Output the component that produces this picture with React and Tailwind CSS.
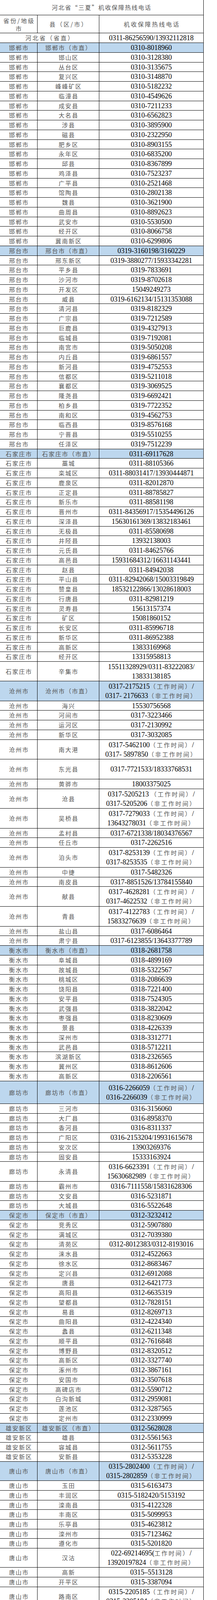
import React, { useState } from 'react';

const CJK = /([\u2E80-\u9FFF\u3000-\u303F\uFF00-\uFFEF]+)/;

// 行高目标（px），累计后取整
const TARGET = { s: 24.75, t: 24.6, u: 24.65, d: 50.6, d2: 49.35, x: 50, y: 50.5, l: 58.3 };

const sections = [
  {
    city: '邯郸市', h: 's', rows: [
      ['邯郸市（市直）', '0310-8018960'],
      ['邯山区', '0310-3128380'],
      ['丛台区', '0310-3135675'],
      ['复兴区', '0310-3148870'],
      ['峰峰矿区', '0310-5182232'],
      ['临漳县', '0310-4549626'],
      ['成安县', '0310-7211233'],
      ['大名县', '0310-6562823'],
      ['涉县', '0310-3895900'],
      ['磁县', '0310-2322950'],
      ['肥乡区', '0310-8903155'],
      ['永年区', '0310-6835200'],
      ['邱县', '0310-8367899'],
      ['鸡泽县', '0310-7523237'],
      ['广平县', '0310-2521468'],
      ['馆陶县', '0310-2802138'],
      ['魏县', '0310-3621900'],
      ['曲周县', '0310-8892623'],
      ['武安市', '0310-5530500'],
      ['经开区', '0310-8066758'],
      ['冀南新区', '0310-6299806'],
    ],
  },
  {
    city: '邢台市', h: 's', rows: [
      ['邢台市（市直）', '0319-3160198/3160229'],
      ['邢东新区', '0319-3880277/15933342281'],
      ['平乡县', '0319-7833691'],
      ['沙河市', '0319-8702618'],
      ['开发区', '15049249273'],
      ['威县', '0319-6162134/15131353088'],
      ['清河县', '0319-8182329'],
      ['广宗县', '0319-7212589'],
      ['巨鹿县', '0319-4327913'],
      ['临城县', '0319-7192081'],
      ['南宫市', '0319-5050208'],
      ['内丘县', '0319-6861557'],
      ['新河县', '0319-4752553'],
      ['信都区', '0319-5211018'],
      ['襄都区', '0319-3069525'],
      ['隆尧县', '0319-6692421'],
      ['柏乡县', '0319-7722352'],
      ['南和区', '0319-4562753'],
      ['临西县', '0319-8576168'],
      ['宁晋县', '0319-5510255'],
      ['任泽区', '0319-7512239'],
    ],
  },
  {
    city: '石家庄市', h: 's', rows: [
      ['石家庄市（市直）', '0311-69117628'],
      ['藁城', '0311-88105366'],
      ['栾城区', '0311-88031417/13930444871'],
      ['鹿泉区', '0311-82012870'],
      ['正定县', '0311-88785827'],
      ['新乐市', '0311-88581198'],
      ['晋州市', '0311-84356917/15354496126'],
      ['深泽县', '15630161369/13832183461'],
      ['无极县', '0311-85580698'],
      ['井陉县', '13932138003'],
      ['元氏县', '0311-84625766'],
      ['高邑县', '15931684312/16631143441'],
      ['赵县', '0311-84942038'],
      ['平山县', '0311-82942068/15003319849'],
      ['赞皇县', '18532122866/13028618003'],
      ['行唐县', '0311-82981219'],
      ['灵寿县', '15613157374'],
      ['矿区', '15081860152'],
      ['长安区', '0311-85996718'],
      ['新华区', '0311-86952388'],
      ['高新区', '13833169968'],
      ['经开区', '13315958813'],
      ['辛集市', ['15511328929/0311-83222083/', '13833138185'], 'x'],
    ],
  },
  {
    city: '沧州市', h: 's', rows: [
      ['沧州市（市直）', ['0317-2175215（工作时间）/', '0317- 2176633（非工作时间）'], 'd'],
      ['海兴', '15530756568'],
      ['河间市', '0317-3223466'],
      ['运河区', '0317-2130992'],
      ['新华区', '0317-3032085'],
      ['南大港', ['0317-5462100（工作时间）/', '0317- 5897850（非工作时间）'], 'd'],
      ['东光县', '0317-7721533/18333768531', 'd'],
      ['黄骅市', '18003375025'],
      ['沧县', ['0317-5205213 （工作时间）/', '0317-5205206（非工作时间）'], 'd'],
      ['吴桥县', ['0317-7279033（工作时间）/', '13643278031（非工作时间）'], 'd'],
      ['孟村县', '0317-6721338/18034376567'],
      ['任丘市', '0317-2262516'],
      ['泊头市', ['0317-8253139（工作时间）/', '0317-8253535（非工作时间）'], 'd'],
      ['中捷', '0317-5482326'],
      ['南皮县', '0317-8851526/13784155840'],
      ['献县', ['0317-4628281（工作时间）/', '0317-4622532（非工作时间）'], 'd'],
      ['青县', ['0317-4122783（工作时间）/', '15833276639（非工作时间）'], 'd'],
      ['盐山县', '0317-6086464'],
      ['肃宁县', '0317-6123855/13643377789'],
    ],
  },
  {
    city: '衡水市', h: 's', rows: [
      ['衡水市（市直）', '0318-2681758'],
      ['阜城县', '0318-4899169'],
      ['故城县', '0318-5322567'],
      ['桃城区', '0318-2086639'],
      ['饶阳县', '0318-7221400'],
      ['安平县', '0318-7524305'],
      ['武强县', '0318-3822042'],
      ['枣强县', '0318-8230609'],
      ['景县', '0318-4226339'],
      ['深州市', '0318-3312771'],
      ['武邑县', '0318-5712211'],
      ['滨湖新区', '0318-2326565'],
      ['冀州区', '0318-8612606'],
      ['高新区', '0318-2206561'],
    ],
  },
  {
    city: '廊坊市', h: 's', rows: [
      ['廊坊市（市直）', ['0316-2266059（工作时间）/', '0316-2266039（非工作时间）'], 'l'],
      ['三河市', '0316-3156060'],
      ['大厂县', '0316-8958370'],
      ['香河县', '0316-8311337'],
      ['广阳区', '0316-2153204/19931615678'],
      ['安次区', '13903269376'],
      ['固安县', '15333163924'],
      ['永清县', ['0316-6623391（工作时间）/', '15630682989（非工作时间）'], 'y'],
      ['霸州市', '0316-7111558/15831628306'],
      ['文安县', '0316-5231871'],
      ['大城县', '0316-5522648'],
    ],
  },
  {
    city: '保定市', h: 's', rows: [
      ['保定市（市直）', '0312-3232412'],
      ['竞秀区', '0312-5907880'],
      ['满城区', '0312-7039380'],
      ['清苑区', '0312-8012383/0312-8193016'],
      ['涞水县', '0312-4522663'],
      ['徐水区', '0312-8683467'],
      ['定兴县', '0312-6912088'],
      ['唐县', '0312-6421773'],
      ['高阳县', '0312-6635319'],
      ['望都县', '0312-7828151'],
      ['易县', '0312-8269713'],
      ['曲阳县', '0312-4224340'],
      ['蠡县', '0312-6211348'],
      ['顺平县', '0312-7616848'],
      ['博野县', '0312-8320512'],
      ['高新区', '0312-3327740'],
      ['涿州市', '0312-3867161'],
      ['安国市', '0312-3507618'],
      ['高碑店市', '0312-5590712'],
      ['白沟新城', '0312-2959081'],
      ['莲池区', '0312-3287565'],
      ['定州市', '0312-2330999'],
    ],
  },
  {
    city: '雄安新区', h: 't', rows: [
      ['雄安新区（市直）', '0312-5628028'],
      ['雄县', '0312-5561563'],
      ['容城县', '0312-5611755'],
      ['安新县', '0312-5353228'],
    ],
  },
  {
    city: '唐山市', h: 'u', rows: [
      ['唐山市（市直）', ['0315-2802400（工作时间）/', '0315-2802859（非工作时间）'], 'd2'],
      ['玉田', '0315-6163473'],
      ['丰润区', '0315-5182420/5153192'],
      ['滦南县', '0315-4122328'],
      ['丰南区', '0315-5099953'],
      ['乐亭县', '0315-4623812'],
      ['滦州市', '0315-7123462'],
      ['遵化市', '0315-5201820'],
      ['汉沽', ['022-69214695(工作时间）/', '13920197824（非工作时间）'], 'd2'],
      ['高新', '0315–5513128'],
      ['开平区', '0315-3387094'],
      ['路南区', ['0315-2205185（工作时间）/', '0315-2205184（非工作时间）'], 'd2'],
      ['迁安', '0315-5215611'],
      ['古冶区', '0315-3512127'],
      ['海港', '0315-2915916'],
      ['芦台', '022-69388074'],
      ['路北区', '0315-3724003'],
      ['曹妃甸', '0315-8727856'],
      ['迁西', '0315-5661987'],
    ],
  },
  {
    city: '秦皇岛市', h: 't', rows: [
      ['秦皇岛市（市直）', '0335-8017577'],
      ['卢龙县', '0335-7012246'],
      ['昌黎县', '0335-2989536/15028565999'],
    ],
  },
];

// 展开为行，按累计位置取整得到每行高度
const allRows = [];
let cum = 110;
sections.forEach((sec) => {
  sec.rows.forEach(([county, phone, h], i) => {
    const start = Math.round(cum);
    cum += TARGET[h || sec.h];
    allRows.push({ city: sec.city, county, phone, px: Math.round(cum) - start, blue: i === 0 });
  });
});

function Zh({ children, wide }) {
  return (
    <span
      className={`font-['Noto_Sans_CJK_SC',sans-serif] text-[15px] leading-[20px] text-[#555] whitespace-nowrap ${
        wide ? 'tracking-[3px] mr-[-3px]' : 'tracking-[2px] mr-[-2px]'
      }`}
    >
      {children}
    </span>
  );
}

function Mixed({ text }) {
  const parts = text.split(CJK);
  return parts.map((p, i) => {
    if (!p) return null;
    if (i % 2 === 1) {
      return (
        <span key={i} className="font-['Noto_Sans_CJK_SC',sans-serif] text-[15px] leading-[20px] text-[#555] tracking-[3px]">
          {p}
        </span>
      );
    }
    return (
      <span key={i} className="font-['Liberation_Serif',serif] text-[18px] leading-[20px] text-black whitespace-pre">
        {p}
      </span>
    );
  });
}

function Row({ city, county, phone, px, blue }) {
  const lines = Array.isArray(phone) ? phone : [phone];
  return (
    <div
      className={`flex shrink-0 overflow-hidden border-b border-black ${blue ? 'bg-[#bdd7ee]' : ''}`}
      style={{ height: px }}
    >
      <div className="w-[96px] shrink-0 border-r border-black flex items-center justify-center">
        <Zh>{city}</Zh>
      </div>
      <div className="w-[158px] shrink-0 border-r border-black flex items-center justify-center">
        <Zh>{county}</Zh>
      </div>
      <div className="w-[267px] shrink-0 border-r border-black flex flex-col items-center justify-center">
        {lines.map((l, i) => (
          <div key={i} className="flex items-center h-[24px] whitespace-nowrap">
            <Mixed text={l} />
          </div>
        ))}
      </div>
    </div>
  );
}

// 视口比 555px 窄时按比例缩放整页
function useFitZoom() {
  const [zoom] = useState(() => {
    if (typeof document === 'undefined') return 1;
    const w = document.documentElement.clientWidth || window.innerWidth || 555;
    return w > 0 && w < 555 ? w / 555 : 1;
  });
  return zoom;
}

export default function App() {
  const zoom = useFitZoom();
  return (
    <div className="w-[555px] bg-white flex" style={{ zoom }}>
      <div className="w-[521px] shrink-0 flex flex-col">
        {/* 标题 */}
        <div className="h-[39px] shrink-0 border-b border-r border-black flex items-center justify-center">
          <span className="font-['Noto_Sans_CJK_SC',sans-serif] text-[15px] leading-[20px] text-[#555] tracking-[2px]">
            河北省“三夏”机收保障热线电话
          </span>
        </div>

        {/* 表头 */}
        <div className="flex shrink-0 h-[46px] border-b border-black">
          <div className="w-[96px] shrink-0 border-r border-black flex flex-col items-center justify-center pt-[2px] leading-[24px]">
            <Zh wide>省份/地级</Zh>
            <Zh wide>市</Zh>
          </div>
          <div className="w-[158px] shrink-0 border-r border-black flex items-center justify-center">
            <Zh wide>县（区/市）</Zh>
          </div>
          <div className="w-[267px] shrink-0 border-r border-black flex items-center justify-center">
            <Zh wide>机收保障热线电话</Zh>
          </div>
        </div>

        {/* 省直 */}
        <div className="flex shrink-0 h-[25px] border-b border-black">
          <div className="w-[254px] shrink-0 border-r border-black flex items-center justify-center">
            <Zh wide>河北省（省直）</Zh>
          </div>
          <div className="w-[267px] shrink-0 border-r border-black flex items-center justify-center">
            <Mixed text="0311-86256590/13932112818" />
          </div>
        </div>

        {allRows.map((r) => (
          <Row key={r.city + r.county} {...r} />
        ))}
      </div>

      {/* 右侧留白 */}
      <div className="w-[34px] shrink-0" />
    </div>
  );
}
